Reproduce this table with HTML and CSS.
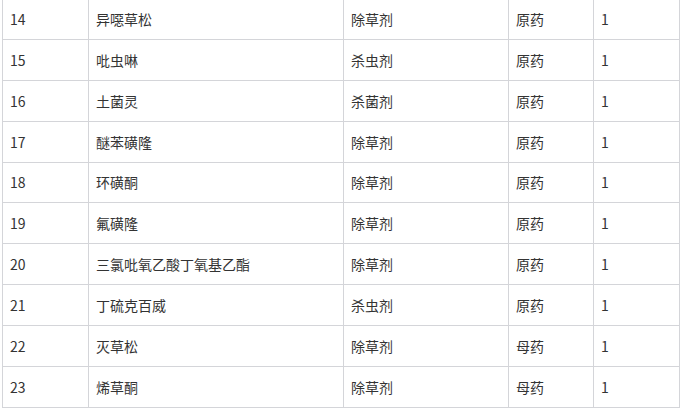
FILE: index.html
```html
<!DOCTYPE html>
<html lang="zh-CN">
<head>
<meta charset="utf-8">
<link rel="stylesheet" href="styles.css">
</head>
<body>
<div class="wrap">
<table class="list">
<colgroup>
<col class="c1"><col class="c2"><col class="c3"><col class="c4"><col class="c5">
</colgroup>
<tbody>
<tr><td>14</td><td>异噁草松</td><td>除草剂</td><td>原药</td><td>1</td></tr>
<tr><td>15</td><td>吡虫啉</td><td>杀虫剂</td><td>原药</td><td>1</td></tr>
<tr><td>16</td><td>土菌灵</td><td>杀菌剂</td><td>原药</td><td>1</td></tr>
<tr><td>17</td><td>醚苯磺隆</td><td>除草剂</td><td>原药</td><td>1</td></tr>
<tr><td>18</td><td>环磺酮</td><td>除草剂</td><td>原药</td><td>1</td></tr>
<tr><td>19</td><td>氟磺隆</td><td>除草剂</td><td>原药</td><td>1</td></tr>
<tr><td>20</td><td>三氯吡氧乙酸丁氧基乙酯</td><td>除草剂</td><td>原药</td><td>1</td></tr>
<tr><td>21</td><td>丁硫克百威</td><td>杀虫剂</td><td>原药</td><td>1</td></tr>
<tr><td>22</td><td>灭草松</td><td>除草剂</td><td>母药</td><td>1</td></tr>
<tr><td>23</td><td>烯草酮</td><td>除草剂</td><td>母药</td><td>1</td></tr>
</tbody>
</table>
</div>
</body>
</html>
```
FILE: styles.css
```css
html, body {
  margin: 0;
  padding: 0;
  background: #fff;
}
.wrap {
  padding-left: 2px;
  margin-top: -2px;
}
.list {
  border-collapse: collapse;
  table-layout: fixed;
  width: 677px;
  font-family: "Noto Sans CJK SC", "Microsoft YaHei", sans-serif;
  font-size: 14px;
  color: #333;
}
.c1 { width: 86px; }
.c2 { width: 255px; }
.c3 { width: 165px; }
.c4 { width: 85px; }
.c5 { width: 86px; }
.list td {
  border: 1px solid #d4d5d9;
  padding: 0 7px;
  line-height: 20px;
  vertical-align: middle;
  white-space: nowrap;
}
.list tr {
  height: 40.88px;
}
```
